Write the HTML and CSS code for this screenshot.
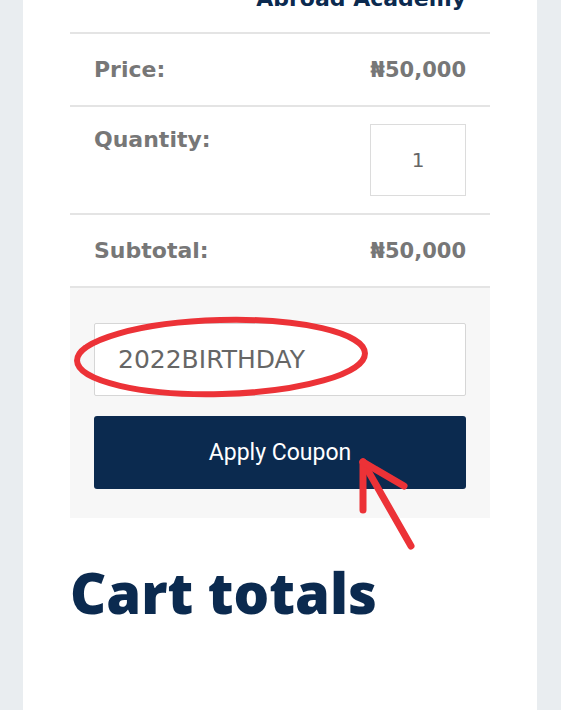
FILE: index.html
```html
<!DOCTYPE html>
<html lang="en">
<head>
  <meta charset="UTF-8">
  <meta name="viewport" content="width=device-width, initial-scale=1.0">
  <title>Cart</title>
  <link rel="stylesheet" href="styles.css">
</head>
<body>
  <div class="page">
    <div class="card">
      <div class="product-name">Abroad Academy</div>

      <div class="cart-row">
        <span class="label">Price:</span>
        <span class="value">&#8358;50,000</span>
      </div>
      <div class="cart-row qty-row">
        <span class="label">Quantity:</span>
        <input type="text" class="qty" value="1">
      </div>
      <div class="cart-row">
        <span class="label">Subtotal:</span>
        <span class="value">&#8358;50,000</span>
      </div>

      <div class="coupon">
        <input type="text" class="coupon-input" value="2022BIRTHDAY">
        <button type="button" class="coupon-btn">Apply Coupon</button>
      </div>

      <h2 class="totals-title">Cart totals</h2>
      <div class="totals-sub">Subtotal</div>
    </div>
  </div>

  <!-- red marks drawn over the screenshot -->
  <svg class="marks" width="561" height="710" viewBox="0 0 561 710">
    <ellipse cx="221" cy="357" rx="144" ry="37" transform="rotate(-1.5 221 357)" fill="none" stroke="#ec3237" stroke-width="6"/>
    <g stroke="#ec3237" stroke-width="7" stroke-linecap="round" fill="none">
      <line x1="363" y1="462" x2="411" y2="546"/>
      <line x1="363" y1="462" x2="363" y2="510"/>
      <line x1="363" y1="462" x2="404" y2="486"/>
    </g>
  </svg>
</body>
</html>
```

FILE: styles.css
```css
body {
  margin: 0;
  background: #e9edf0;
  font-family: 'DejaVu Sans', sans-serif;
  overflow: hidden;
  height: 710px;
}

.page {
  padding: 0 24px 0 23px;
}

.card {
  background: #FFFFFF;
  padding: 0 47px;
  height: 730px;
}

.product-name {
  text-align: right;
  padding-right: 24px;
  font-size: 22px;
  font-weight: 700;
  line-height: 28px;
  color: #0b2a4f;
  margin-top: -15px;
  padding-bottom: 19px;
  border-bottom: 2px solid #e4e4e4;
}

.cart-row {
  display: flex;
  justify-content: space-between;
  align-items: center;
  height: 71px;
  padding: 0 24px;
  border-bottom: 2px solid #e4e4e4;
  font-weight: 700;
  color: #777777;
}

.label {
  font-size: 22px;
}

.value {
  font-size: 21px;
}

.qty-row {
  align-items: flex-start;
  height: auto;
  padding-top: 17px;
  padding-bottom: 17px;
}

.qty-row .label {
  margin-top: 3px;
}

.qty {
  width: 96px;
  height: 72px;
  box-sizing: border-box;
  border: 1px solid #dcdcdc;
  text-align: center;
  font-family: 'DejaVu Sans', sans-serif;
  font-size: 20px;
  color: #666666;
  padding: 0;
}

.coupon {
  background: #f7f7f7;
  padding: 35px 24px 29px;
}

.coupon-input {
  display: block;
  width: 100%;
  height: 73px;
  box-sizing: border-box;
  border: 1px solid #d6d6d6;
  border-radius: 2px;
  padding: 0 23px;
  font-family: 'DejaVu Sans', sans-serif;
  font-size: 25px;
  color: #666666;
  background: #FFFFFF;
  margin: 0 0 20px;
}

.coupon-btn {
  display: block;
  width: 100%;
  height: 73px;
  border: none;
  border-radius: 3px;
  background: #0b2a4f;
  color: #FFFFFF;
  font-family: Roboto, sans-serif;
  font-size: 23px;
  cursor: pointer;
}

.totals-title {
  margin: 42px 0 0;
  font-family: 'Open Sans', sans-serif;
  font-size: 56px;
  line-height: 64px;
  font-weight: 800;
  color: #0b2a4f;
}

.totals-sub {
  margin-top: 84px;
  padding-left: 24px;
  font-size: 22px;
  line-height: 26px;
  font-weight: 700;
  color: #c8c8c8;
}

.marks {
  position: absolute;
  top: 0;
  left: 0;
  pointer-events: none;
}
```
